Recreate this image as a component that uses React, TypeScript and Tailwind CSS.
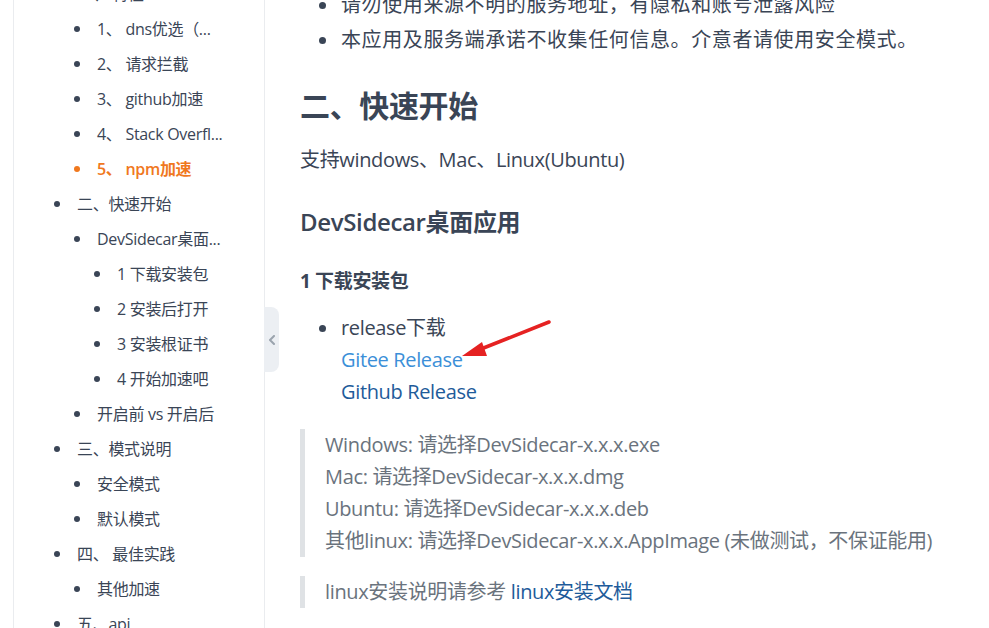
const font = "font-['Open_Sans','Noto_Sans_CJK_SC',sans-serif]";

type NavItem = { level: 1 | 2 | 3; text: string; active?: boolean };

const nav: NavItem[] = [
  { level: 1, text: "一、 特性" },
  { level: 2, text: "1、 dns优选（..." },
  { level: 2, text: "2、 请求拦截" },
  { level: 2, text: "3、 github加速" },
  { level: 2, text: "4、 Stack Overfl..." },
  { level: 2, text: "5、 npm加速", active: true },
  { level: 1, text: "二、快速开始" },
  { level: 2, text: "DevSidecar桌面..." },
  { level: 3, text: "1 下载安装包" },
  { level: 3, text: "2 安装后打开" },
  { level: 3, text: "3 安装根证书" },
  { level: 3, text: "4 开始加速吧" },
  { level: 2, text: "开启前 vs 开启后" },
  { level: 1, text: "三、模式说明" },
  { level: 2, text: "安全模式" },
  { level: 2, text: "默认模式" },
  { level: 1, text: "四、 最佳实践" },
  { level: 2, text: "其他加速" },
  { level: 1, text: "五、api" },
];

const indent = { 1: "pl-[40px]", 2: "pl-[60px]", 3: "pl-[80px]" };

function Sidebar() {
  return (
    <aside className="relative ml-[13px] w-[252px] shrink-0 border-x border-[#eaecef] tracking-[-0.3px]">
      <ul className="-mt-[24px]">
        {nav.map((item, i) => (
          <li
            key={i}
            className={`flex h-[35px] items-center ${indent[item.level]} text-[16px] ${
              item.active ? "font-semibold text-[#f0781e]" : "text-[#3a4556]"
            }`}
          >
            <span
              className={`h-[6px] w-[6px] shrink-0 rounded-full ${
                item.active ? "bg-[#f0781e]" : "bg-[#3a4556]"
              }`}
            />
            <span className="ml-[17px] whitespace-nowrap">{item.text}</span>
          </li>
        ))}
      </ul>
      {/* collapse tab */}
      <button className="absolute left-full top-[307px] flex h-[65px] w-[15px] items-center justify-center rounded-r-lg bg-[#eceff3] text-[#9aa3ad]">
        <svg width="8" height="10" viewBox="0 0 8 10" fill="none">
          <path d="M6 1 L2 5 L6 9" stroke="currentColor" strokeWidth="2" strokeLinecap="round" strokeLinejoin="round" />
        </svg>
      </button>
    </aside>
  );
}

function Content() {
  return (
    <main className="relative flex-1 pl-[35px] tracking-[-0.35px] text-[#3a4556]">
      <ul className="-mt-[11px] flex flex-col gap-[3px] text-[20px] leading-[32px] tracking-[0.6px]">
        <li className="flex items-center">
          <span className="ml-[19px] h-[7px] w-[7px] rounded-full bg-[#3a4556]" />
          <span className="ml-[15px] whitespace-nowrap">请勿使用来源不明的服务地址，有隐私和账号泄露风险</span>
        </li>
        <li className="flex items-center">
          <span className="ml-[19px] h-[7px] w-[7px] rounded-full bg-[#3a4556]" />
          <span className="ml-[15px] whitespace-nowrap">本应用及服务端承诺不收集任何信息。介意者请使用安全模式。</span>
        </li>
      </ul>

      <h2 className="mt-[31px] text-[30px] font-bold leading-[38px]">二、快速开始</h2>
      <p className="mt-[19px] text-[20px] leading-[32px]">支持windows、Mac、Linux(Ubuntu)</p>
      <h3 className="mt-[31px] text-[24px] font-semibold leading-[30px]">DevSidecar桌面应用</h3>
      <h4 className="mt-[32px] text-[19px] font-bold leading-[24px]">1 下载安装包</h4>

      <ul className="mt-[19px] text-[20px] leading-[32px]">
        <li className="flex items-start">
          <span className="ml-[19px] mt-[13px] h-[7px] w-[7px] shrink-0 rounded-full bg-[#3a4556]" />
          <div className="ml-[15px] flex flex-col">
            <span>release下载</span>
            <a className="text-[#3b8fd8]">Gitee Release</a>
            <a className="text-[#1e5b9a]">Github Release</a>
          </div>
        </li>
      </ul>

      <blockquote className="mt-[21px] border-l-[5px] border-[#dfe2e5] pl-[20px] text-[20px] leading-[32px] text-[#6a737d]">
        <p>Windows: 请选择DevSidecar-x.x.x.exe</p>
        <p>Mac: 请选择DevSidecar-x.x.x.dmg</p>
        <p>Ubuntu: 请选择DevSidecar-x.x.x.deb</p>
        <p className="whitespace-nowrap">其他linux: 请选择DevSidecar-x.x.x.AppImage (未做测试，不保证能用)</p>
      </blockquote>

      <blockquote className="mt-[19px] border-l-[5px] border-[#dfe2e5] pl-[20px] text-[20px] leading-[32px] text-[#6a737d]">
        <p>
          linux安装说明请参考 <a className="text-[#1e5b9a]">linux安装文档</a>
        </p>
      </blockquote>

      {/* red annotation arrow */}
      <svg className="pointer-events-none absolute left-[195px] top-[316px]" width="100" height="46" viewBox="0 0 100 46">
        <line x1="89" y1="6" x2="16" y2="35" stroke="#e52222" strokeWidth="3.5" strokeLinecap="round" />
        <polygon points="2,40 22,26 27,40" fill="#e52222" />
      </svg>
    </main>
  );
}

export default function App() {
  return (
    <div className={`flex h-[628px] w-[989px] overflow-hidden bg-white ${font}`}>
      <Sidebar />
      <Content />
    </div>
  );
}
